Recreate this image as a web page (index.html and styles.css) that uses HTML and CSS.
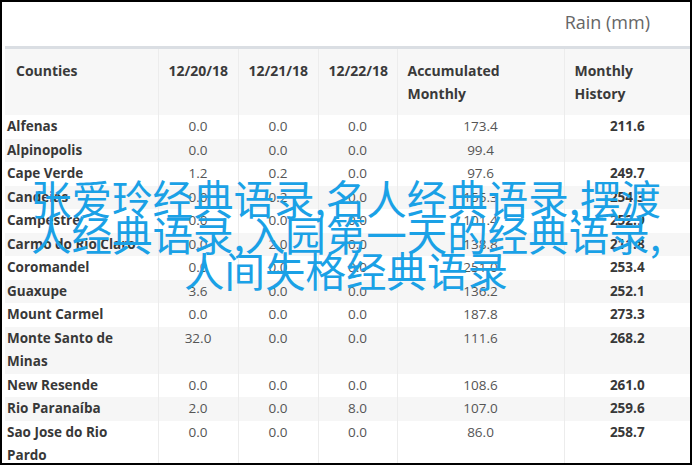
FILE: index.html
```html
<!DOCTYPE html>
<html lang="zh">
<head>
<meta charset="utf-8">
<title>Rain (mm)</title>
<link rel="stylesheet" href="styles.css">
</head>
<body>
<div class="frame">
  <div class="caption">Rain (mm)</div>
  <table class="rain">
    <colgroup>
      <col class="c-county"><col class="c-day"><col class="c-day"><col class="c-day3"><col class="c-acc"><col class="c-hist">
    </colgroup>
    <thead>
      <tr>
        <th>Counties</th>
        <th>12/20/18</th>
        <th>12/21/18</th>
        <th>12/22/18</th>
        <th>Accumulated Monthly</th>
        <th>Monthly History</th>
      </tr>
    </thead>
    <tbody>
      <tr><td class="county">Alfenas</td><td>0.0</td><td>0.0</td><td>0.0</td><td>173.4</td><td class="hist">211.6</td></tr>
      <tr><td class="county">Alpinopolis</td><td>0.0</td><td>0.0</td><td>0.0</td><td>99.4</td><td class="hist"></td></tr>
      <tr><td class="county">Cape Verde</td><td>1.2</td><td>0.2</td><td>0.0</td><td>97.6</td><td class="hist">249.7</td></tr>
      <tr><td class="county">Candeias</td><td>0.0</td><td>0.2</td><td>0.0</td><td>155.3</td><td class="hist">254.3</td></tr>
      <tr><td class="county">Campestre</td><td>0.0</td><td>0.0</td><td>0.0</td><td>101.4</td><td class="hist">252.9</td></tr>
      <tr><td class="county">Carmo do Rio Claro</td><td>0.0</td><td>2.0</td><td>0.0</td><td>138.8</td><td class="hist">211.8</td></tr>
      <tr><td class="county">Coromandel</td><td>0.0</td><td>0.0</td><td>0.0</td><td>251.0</td><td class="hist">253.4</td></tr>
      <tr><td class="county">Guaxupe</td><td>3.6</td><td>0.0</td><td>0.0</td><td>136.2</td><td class="hist">252.1</td></tr>
      <tr><td class="county">Mount Carmel</td><td>0.0</td><td>0.0</td><td>0.0</td><td>187.8</td><td class="hist">273.3</td></tr>
      <tr><td class="county">Monte Santo de Minas</td><td>32.0</td><td>0.0</td><td>0.0</td><td>111.6</td><td class="hist">268.2</td></tr>
      <tr><td class="county">New Resende</td><td>0.0</td><td>0.0</td><td>0.0</td><td>108.6</td><td class="hist">261.0</td></tr>
      <tr><td class="county">Rio Paranaíba</td><td>2.0</td><td>0.0</td><td>8.0</td><td>107.0</td><td class="hist">259.6</td></tr>
      <tr><td class="county">Sao Jose do Rio Pardo</td><td>0.0</td><td>0.0</td><td>0.0</td><td>86.0</td><td class="hist">258.7</td></tr>
    </tbody>
  </table>
  <div class="overlay">张爱玲经典语录,名人经典语录,摆渡人经典语录,入园第一天的经典语录,人间失格经典语录</div>
</div>
</body>
</html>
```

FILE: styles.css
```css
html, body {
  margin: 0;
  padding: 0;
  background: #fff;
}

.frame {
  position: relative;
  box-sizing: border-box;
  width: 692px;
  height: 465px;
  border: 2px solid #000;
  padding-left: 3px;
  overflow: hidden;
  font-family: "Open Sans", "Noto Sans", sans-serif;
  color: #333;
}

.caption {
  box-sizing: border-box;
  height: 44px;
  padding-top: 6px;
  padding-right: 40px;
  line-height: 28px;
  font-size: 18px;
  color: #666;
  text-align: right;
}

.rain {
  border-collapse: collapse;
  table-layout: fixed;
  width: 685px;
}

.c-county { width: 153px; }
.c-day { width: 80px; }
.c-day3 { width: 79px; }
.c-acc { width: 167px; }
.c-hist { width: 126px; }

.rain thead tr {
  border-top: 3px solid #dadee3;
}

.rain th {
  background: #f7f7f7;
  padding: 10px 6px 10px 10px;
  line-height: 23px;
  font-size: 14px;
  font-weight: 700;
  color: #3a3a3a;
  text-align: left;
  vertical-align: top;
  border-left: 1px solid #ececec;
}

.rain th:first-child {
  border-left: none;
  padding-left: 11px;
}

.rain td {
  padding: 0;
  line-height: 23.5px;
  font-size: 13.5px;
  color: #555;
  text-align: center;
  vertical-align: top;
  border-left: 1px solid #ececec;
}

.rain td.county {
  border-left: none;
  text-align: left;
  padding: 0 8px 0 2px;
  font-weight: 700;
  color: #383838;
}

.rain td.hist {
  font-weight: 700;
  color: #383838;
}

.rain tbody tr:nth-child(even) td {
  background: #f6f6f6;
}

.overlay {
  position: absolute;
  left: 17px;
  top: 178px;
  width: 654px;
  font-family: "Noto Sans CJK SC", "Noto Sans", sans-serif;
  font-size: 40.5px;
  line-height: 36px;
  color: #1aa1e6;
  text-align: center;
}
```
